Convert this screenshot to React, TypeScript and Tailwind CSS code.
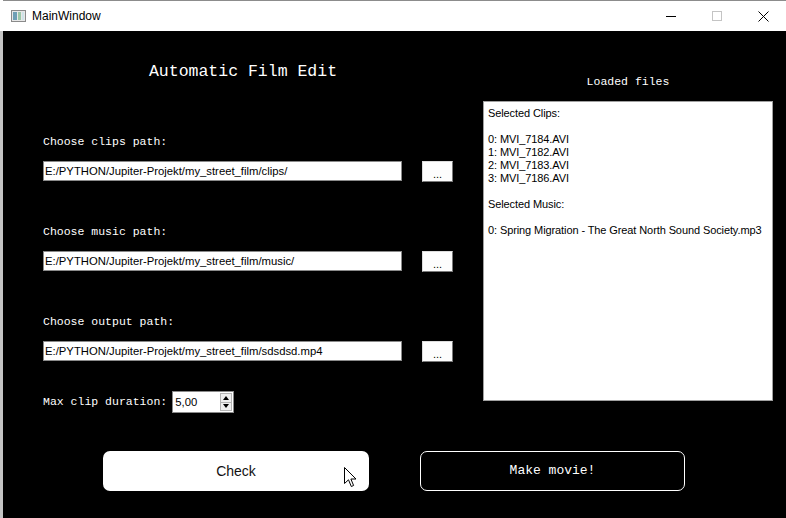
const mono = "font-['Liberation_Mono',monospace]";
const sans = "font-['Liberation_Sans',Arial,sans-serif]";

const PathRow = ({ label, value, gap }: { label: string; value: string; gap: string }) => (
  <div className={gap}>
    <div className={`${mono} h-[16px] text-[11.5px] leading-[16px] text-white`}>{label}</div>
    <div className="mt-[11px] flex items-start">
      <div className={`${sans} h-[20px] w-[361px] border border-[#8a8a8a] bg-white pl-[1px] text-[11.3px] leading-[18px] text-black whitespace-nowrap overflow-hidden`}>
        {value}
      </div>
      <button className={`${sans} ml-[20px] flex h-[21px] w-[31px] items-end justify-center border border-[#dcdcdc] border-r-[#7a7a7a] border-b-[#7a7a7a] bg-[#fdfdfd] pb-[1px] text-[11px] leading-[12px] text-black`}>
        ...
      </button>
    </div>
  </div>
);

const App = () => {
  return (
    <div className="flex h-[518px] w-[786px] overflow-hidden bg-black">
      <div className="flex w-[3px] flex-col">
        <div className="h-[31px] bg-white" />
        <div className="flex-1 bg-[#c4c4c4]" />
      </div>
      <div className="flex flex-1 flex-col">
        {/* title bar */}
        <div className="flex h-[31px] items-center border-t border-[#8c8c8c] bg-white">
          <div className="ml-[8px] flex h-[12px] w-[15px] gap-[1px] border border-[#8a8a8a] bg-[#e8e8e8] p-[1px]">
            <div className="w-[4px] bg-[#6f9fb5]" />
            <div className="flex-1 bg-[#9cc7a8]" />
            <div className="w-[2px] bg-[#cfe3e8]" />
          </div>
          <span className={`${sans} ml-[6px] text-[12px] text-black`}>MainWindow</span>
          <div className="ml-auto flex h-full">
            <div className="flex w-[46px] items-center justify-center">
              <div className="h-[1px] w-[10px] bg-black" />
            </div>
            <div className="flex w-[46px] items-center justify-center">
              <div className="h-[10px] w-[10px] border border-[#c4c4c4]" />
            </div>
            <div className="flex w-[46px] items-center justify-center">
              <svg width="11" height="11" viewBox="0 0 11 11">
                <path d="M0.5 0.5 L10.5 10.5 M10.5 0.5 L0.5 10.5" stroke="#000" strokeWidth="1" />
              </svg>
            </div>
          </div>
        </div>

        {/* body */}
        <div className="flex flex-1 flex-col bg-black pl-[40px] pt-[30px]">
          <div className="flex">
            <div className="w-[410px]">
              <div className={`${mono} h-[20px] w-[400px] pt-[1px] text-center text-[16.5px] leading-[20px] text-white`}>
                Automatic Film Edit
              </div>
              <PathRow gap="mt-[53px]" label="Choose clips path:" value="E:/PYTHON/Jupiter-Projekt/my_street_film/clips/" />
              <PathRow gap="mt-[42px]" label="Choose music path:" value="E:/PYTHON/Jupiter-Projekt/my_street_film/music/" />
              <PathRow gap="mt-[42px]" label="Choose output path:" value="E:/PYTHON/Jupiter-Projekt/my_street_film/sdsdsd.mp4" />
              <div className="mt-[29px] flex items-center">
                <span className={`${mono} text-[11.5px] leading-[16px] text-white`}>Max clip duration:</span>
                <div className="ml-[5px] flex h-[22px] w-[62px] items-center border border-[#8a8a8a] bg-white">
                  <span className={`${sans} flex-1 pl-[2px] text-[11.3px] leading-[18px] text-black`}>5,00</span>
                  <div className="mr-[1px] flex h-[18px] w-[12px] flex-col border border-[#b5b5b5] bg-[#f0f0f0]">
                    <div className="flex flex-1 items-center justify-center border-b border-[#b5b5b5]">
                      <svg width="6" height="4" viewBox="0 0 6 4"><path d="M3 0 L6 4 L0 4 Z" fill="#000" /></svg>
                    </div>
                    <div className="flex flex-1 items-center justify-center">
                      <svg width="6" height="4" viewBox="0 0 6 4"><path d="M0 0 L6 0 L3 4 Z" fill="#000" /></svg>
                    </div>
                  </div>
                </div>
              </div>
            </div>

            <div className="ml-[30px] w-[290px]">
              <div className={`${mono} mt-[13px] h-[16px] text-center text-[11.5px] leading-[16px] text-white`}>
                Loaded files
              </div>
              <div className={`${sans} mt-[11px] h-[300px] border border-[#a0a0a0] bg-white pl-[4px] pt-[5px] text-[11px] leading-[13px] tracking-[-0.1px] text-black whitespace-pre`}>
                {"Selected Clips:\n\n0: MVI_7184.AVI\n1: MVI_7182.AVI\n2: MVI_7183.AVI\n3: MVI_7186.AVI\n\nSelected Music:\n\n0: Spring Migration - The Great North Sound Society.mp3"}
              </div>
            </div>
          </div>

          <div className="ml-[60px] mt-[38px] flex gap-[51px]">
            <button className={`${sans} relative h-[40px] w-[266px] rounded-[7px] bg-white text-[14px] text-[#111]`}>
              Check
              <svg className="absolute left-[241px] top-[16px]" width="13" height="21" viewBox="0 0 13 21">
                <path d="M0.5 0.5 L0.5 16.5 L4.5 12.8 L7.3 19.5 L9.6 18.5 L6.9 12 L12 12 Z" fill="#fff" stroke="#000" strokeWidth="1" strokeLinejoin="round" />
              </svg>
            </button>
            <button className={`${mono} h-[40px] w-[265px] rounded-[7px] border border-white bg-black text-[13px] text-white`}>
              Make movie!
            </button>
          </div>
        </div>
      </div>
    </div>
  );
};

export default App;
